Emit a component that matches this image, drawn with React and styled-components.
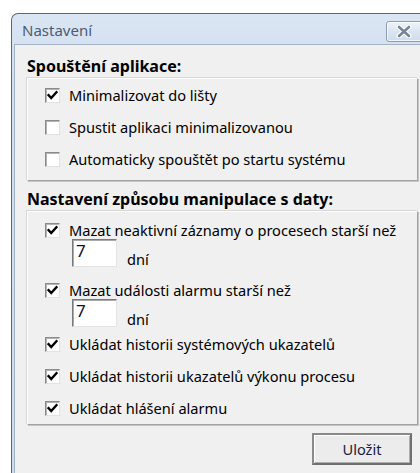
import React from "react";
import styled, { createGlobalStyle } from "styled-components";

const Global = createGlobalStyle`
  html, body { margin: 0; padding: 0; background: #ffffff; overflow: hidden; }
  body { font-family: "Noto Sans", "Open Sans", "DejaVu Sans", sans-serif; }
`;

const Page = styled.div`
  width: 420px;
  height: 473px;
  padding: 13px 0 0 11px;
  box-sizing: border-box;
  overflow: hidden;
`;

const Window = styled.div`
  width: 424px;
  height: 480px;
  box-sizing: border-box;
  border: 1px solid #5e6670;
  border-bottom: none;
  border-radius: 7px 7px 0 0;
  background: linear-gradient(#dbe6f4, #d3e0f0 40px, #cddbed);
  display: flex;
  flex-direction: column;
  padding: 0 2px;
`;

const TitleBar = styled.div`
  height: 30px;
  display: flex;
  align-items: center;
  justify-content: space-between;
  padding: 0 0 0 8px;
  flex: none;
`;

const Title = styled.span`
  font-size: 15px;
  color: #4c5b70;
  line-height: 20px;
  margin-top: 1px;
`;

const CloseButton = styled.div`
  width: 40px;
  height: 21px;
  margin-top: 5px;
  margin-right: 6px;
  box-sizing: border-box;
  border: 1px solid #8c9bb1;
  border-radius: 3px;
  background: linear-gradient(#eef3f9, #dbe5f1 50%, #d0dcec);
  box-shadow: inset 0 0 0 1px rgba(255, 255, 255, 0.7);
  display: flex;
  align-items: center;
  justify-content: flex-start;
  padding-left: 9px;
`;

const Body = styled.div`
  flex: 1;
  border: 1px solid #a5b3c6;
  border-bottom: none;
  background: #f0f0f0;
  padding: 0 13px 0 12px;
  display: flex;
  flex-direction: column;
`;

const GroupTitle = styled.div`
  font-weight: 700;
  font-size: 16px;
  line-height: 20px;
  color: #000;
  margin-top: ${(p) => p.$top}px;
  margin-bottom: 2px;
`;

const Panel = styled.div`
  border: 1px solid;
  border-color: #ffffff #a3a3a3 #a3a3a3 #ffffff;
  box-shadow: -1px -1px 0 #d6d6d6, 1px 1px 0 #c4c4c4;
  background: #f0f0f0;
  padding: ${(p) => p.$pad};
  display: flex;
  flex-direction: column;
`;

const CheckRow = styled.label`
  height: ${(p) => p.$h || 32}px;
  display: flex;
  align-items: center;
  padding-left: 17px;
  font-size: 14.6px;
  color: #000;
`;

const Box = styled.span`
  width: 15px;
  height: 15px;
  box-sizing: border-box;
  border: 1px solid;
  border-color: #8a8a8a #e2e2e2 #e2e2e2 #8a8a8a;
  box-shadow: inset 1px 1px 0 #b4b4b4;
  background: #ffffff;
  display: flex;
  align-items: center;
  justify-content: center;
  margin-right: 9px;
  flex: none;
`;

const DaysRow = styled.div`
  height: 28px;
  display: flex;
  align-items: flex-start;
  padding-left: 44px;
  margin: -3px 0 ${(p) => p.$after}px;
`;

const NumberField = styled.div`
  width: 45px;
  height: 28px;
  box-sizing: border-box;
  border: 1px solid;
  border-color: #7a7a7a #e4e4e4 #e4e4e4 #7a7a7a;
  box-shadow: inset 1px 1px 0 #a9a9a9;
  background: #ffffff;
  font-size: 17px;
  line-height: 20px;
  color: #101030;
  padding: 1px 0 0 3px;
`;

const Unit = styled.span`
  font-size: 14.6px;
  line-height: 20px;
  padding: 10px 0 0 10px;
`;

const Footer = styled.div`
  display: flex;
  justify-content: flex-end;
  padding: 8px 6px 0 0;
`;

const Button = styled.div`
  width: 100px;
  height: 32px;
  box-sizing: border-box;
  border: 2px solid #6f6f6f;
  border-top-color: #8a8a8a;
  border-left-color: #8a8a8a;
  box-shadow: inset 1px 1px 0 #ffffff, inset -1px -1px 0 #b0b0b0;
  background: #ececec;
  display: flex;
  align-items: center;
  justify-content: center;
  font-size: 14.6px;
  color: #1b1b3c;
`;

const Check = () => (
  <svg width="11" height="11" viewBox="0 0 11 11">
    <path d="M1.5 5.2 L4.2 8 L9.5 2.2" fill="none" stroke="#000" strokeWidth="2.4" strokeLinecap="square" />
  </svg>
);

const CloseGlyph = () => (
  <svg width="16" height="13" viewBox="0 0 16 13">
    <path d="M3 2 L13 11 M13 2 L3 11" stroke="#ffffff" strokeWidth="5" strokeLinecap="round" />
    <path d="M3 2 L13 11 M13 2 L3 11" stroke="#77849a" strokeWidth="2.6" strokeLinecap="round" />
  </svg>
);

const Option = ({ checked, children, h }) => (
  <CheckRow $h={h}>
    <Box>{checked && <Check />}</Box>
    {children}
  </CheckRow>
);

const Days = ({ value, after }) => (
  <DaysRow $after={after}>
    <NumberField>{value}</NumberField>
    <Unit>dní</Unit>
  </DaysRow>
);

export default function App() {
  return (
    <Page>
      <Global />
      <Window>
        <TitleBar>
          <Title>Nastavení</Title>
          <CloseButton>
            <CloseGlyph />
          </CloseButton>
        </TitleBar>
        <Body>
          <GroupTitle $top={11}>Spouštění aplikace:</GroupTitle>
          <Panel $pad="0 0 5px">
            <Option checked>Minimalizovat do lišty</Option>
            <Option>Spustit aplikaci minimalizovanou</Option>
            <Option>Automaticky spouštět po startu systému</Option>
          </Panel>
          <GroupTitle $top={8}>Nastavení způsobu manipulace s daty:</GroupTitle>
          <Panel $pad="6px 0 0">
            <Option checked h={24}>Mazat neaktivní záznamy o procesech starší než</Option>
            <Days value="7" after={11} />
            <Option checked h={24}>Mazat události alarmu starší než</Option>
            <Days value="7" after={1} />
            <Option checked>Ukládat historii systémových ukazatelů</Option>
            <Option checked>Ukládat historii ukazatelů výkonu procesu</Option>
            <Option checked>Ukládat hlášení alarmu</Option>
          </Panel>
          <Footer>
            <Button>Uložit</Button>
          </Footer>
        </Body>
      </Window>
    </Page>
  );
}
